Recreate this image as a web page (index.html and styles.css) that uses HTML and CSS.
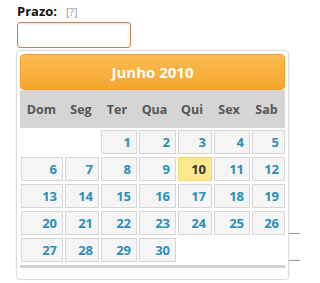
FILE: index.html
```html
<!DOCTYPE html>
<html>
<head>
<meta charset="utf-8">
<link rel="stylesheet" href="styles.css">
</head>
<body>
<div class="bg-lines">
  <div class="bg-line l1"></div>
  <div class="bg-line l2"></div>
</div>
<div class="field">
  <div class="label-row"><span class="label">Prazo:</span><span class="help">[?]</span></div>
  <input class="input" type="text">
</div>
<div class="picker">
  <div class="header">Junho 2010</div>
  <div class="weekdays">
    <span>Dom</span><span>Seg</span><span>Ter</span><span>Qua</span><span>Qui</span><span>Sex</span><span>Sab</span>
  </div>
  <div class="days">
    <span class="empty"></span><span class="empty"></span>
    <span class="d">1</span><span class="d">2</span><span class="d">3</span><span class="d">4</span><span class="d">5</span>
    <span class="d">6</span><span class="d">7</span><span class="d">8</span><span class="d">9</span><span class="d today">10</span><span class="d">11</span><span class="d">12</span>
    <span class="d">13</span><span class="d">14</span><span class="d">15</span><span class="d">16</span><span class="d">17</span><span class="d">18</span><span class="d">19</span>
    <span class="d">20</span><span class="d">21</span><span class="d">22</span><span class="d">23</span><span class="d">24</span><span class="d">25</span><span class="d">26</span>
    <span class="d">27</span><span class="d">28</span><span class="d">29</span><span class="d">30</span>
  </div>
  <div class="footer-bar"></div>
</div>
</body>
</html>
```
FILE: styles.css
```css
html, body {
  margin: 0;
  padding: 0;
  background: #fff;
  width: 300px;
  height: 283px;
  overflow: hidden;
  font-family: "Open Sans", "DejaVu Sans", sans-serif;
}
.bg-lines {
  position: absolute;
  left: 280px;
  top: 0;
  width: 20px;
  height: 283px;
}
.bg-line {
  position: absolute;
  left: 0;
  width: 20px;
  height: 1px;
  background: #9a9a9a;
}
.l1 { top: 233px; }
.l2 { top: 260px; }
.field {
  padding: 3px 0 0 17px;
}
.label-row {
  height: 19px;
  display: flex;
  align-items: baseline;
}
.label {
  font-weight: bold;
  font-size: 13px;
  color: #111;
  line-height: 16px;
}
.help {
  font-size: 10.5px;
  color: #999;
  margin-left: 9px;
}
.input {
  display: block;
  box-sizing: border-box;
  width: 114px;
  height: 26px;
  margin: 0;
  border: 1px solid #c98550;
  border-radius: 3px;
  background: #fff;
  box-shadow: inset 0 1px 2px rgba(0,0,0,0.12);
}
.picker {
  position: absolute;
  left: 16px;
  top: 50px;
  width: 273px;
  height: 230px;
  box-sizing: border-box;
  border: 1px solid #dcdcdc;
  border-radius: 4px;
  background: #fff;
  padding: 3px;
  box-shadow: 0 0 2px rgba(0,0,0,0.08);
}
.header {
  height: 36px;
  box-sizing: border-box;
  border: 1px solid #f2a22c;
  border-radius: 4px;
  background: linear-gradient(#fbbb52, #f6a62c);
  color: #fff;
  font-weight: bold;
  font-size: 15px;
  display: flex;
  align-items: center;
  justify-content: center;
}
.weekdays {
  height: 38px;
  background: #d5d5d5;
  display: grid;
  grid-template-columns: 43px 36px 36px 39px 36px 38px 37px;
  align-items: center;
  font-weight: bold;
  font-size: 12.5px;
  color: #555;
  text-align: center;
}
.days {
  display: grid;
  grid-template-columns: 42px 34px 36px 37px 34px 36px 33px;
  grid-auto-rows: 24px;
  column-gap: 2px;
  row-gap: 3px;
  padding: 2px 0 0 1px;
}
.d {
  box-sizing: border-box;
  border: 1px solid #d6d6d6;
  background: #f5f5f5;
  color: #2a8fb9;
  font-weight: bold;
  font-size: 13px;
  display: flex;
  align-items: center;
  justify-content: flex-end;
  padding-right: 5px;
}
.d.today {
  background: #fde88f;
  border-color: #f3d66a;
  color: #333;
}
.footer-bar {
  margin-top: 3px;
  height: 3px;
  background: #d0d0d0;
}
```
